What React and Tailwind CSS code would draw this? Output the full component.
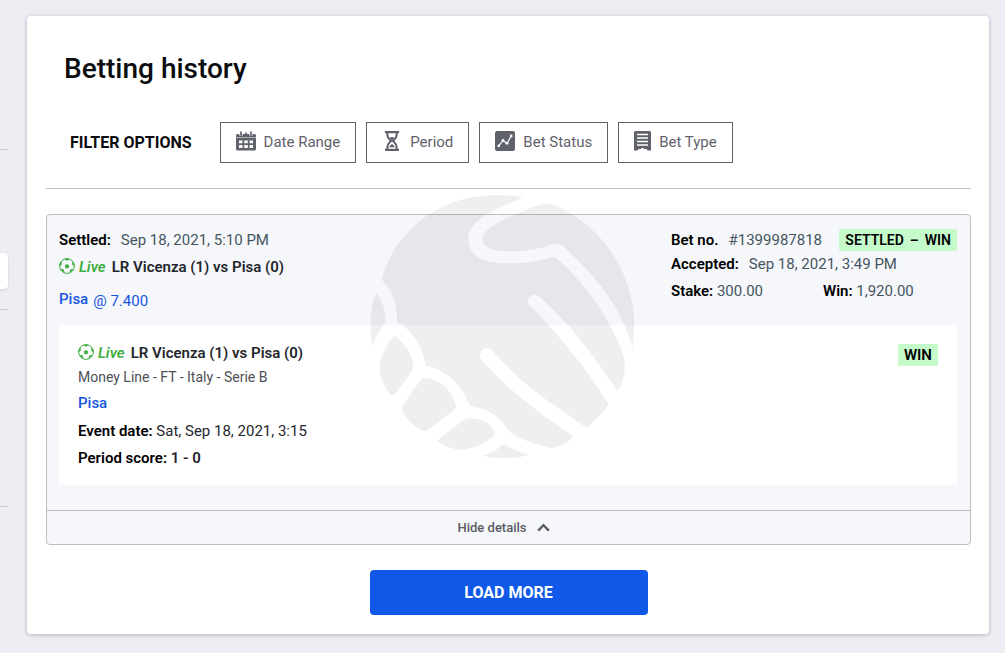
import { useState } from 'react';

const CalendarIcon = () => (
  <svg width="20" height="20" viewBox="0 0 20 20" fill="none" aria-hidden="true">
    <path d="M1.500 3h17A1.500 1.500 0 0 1 20 4.500V6H0V4.500A1.500 1.500 0 0 1 1.500 3zM0 6.600h20v11.400a1.500 1.500 0 0 1-1.500 1.500h-17A1.500 1.500 0 0 1 0 18z" fill="#5f626b" />
    <path d="M5 0v4.500M15 0v4.500" stroke="#fff" strokeWidth="3.400" />
    <path d="M5 .500v4M15 .500v4M10 1.500v3" stroke="#5f626b" strokeWidth="1.700" />
    <path
      fill="#fff"
      d="M3 9.500h3.500v2.800H3zM8.200 9.500h3.600v2.800H8.200zM13.500 9.500H17v2.800h-3.500zM3 14.100h3.500v2.800H3zM8.200 14.100h3.600v2.800H8.200zM13.500 14.100H17v2.800h-3.500z"
    />
  </svg>
);

const HourglassIcon = () => (
  <svg width="20" height="20" viewBox="-3 0 20 20" fill="none" stroke="#5f626b" aria-hidden="true">
    <path d="M0 1.200h14M0 18.800h14" strokeWidth="2.200" />
    <path d="M2.200 1.500c0 4.800 1.200 6 3.800 8.500-2.600 2.500-3.800 3.700-3.800 8.500M11.800 1.500c0 4.800-1.200 6-3.800 8.500 2.600 2.500 3.800 3.700 3.800 8.500" strokeWidth="2" />
    <path d="M4 6.200h6L7 9.500zM3.800 16.200 7 12.800l3.200 3.400z" fill="#5f626b" stroke="none" />
  </svg>
);

const ChartIcon = () => (
  <svg width="20" height="20" viewBox="0 0 20 20" fill="none" aria-hidden="true">
    <rect width="20" height="20" rx="2" fill="#5f626b" />
    <path d="M3.800 14.800 8 9.500l4 2.800L16.200 5" stroke="#fff" strokeWidth="1.200" />
    <g fill="#fff">
      <circle cx="3.800" cy="14.800" r="1.400" />
      <circle cx="8" cy="9.500" r="1.400" />
      <circle cx="12" cy="12.300" r="1.400" />
      <circle cx="16.200" cy="5" r="1.400" />
    </g>
  </svg>
);

const ReceiptIcon = () => (
  <svg width="17" height="20" viewBox="0 0 17 20" fill="none" aria-hidden="true">
    <path
      fill="#5f626b"
      d="M1.500 0h14A1.500 1.500 0 0 1 17 1.500V19.500h-3.500l-1-1.500H10.500L8.500 16.800 6.500 18H4.500l-1 1.500H0V1.500A1.500 1.500 0 0 1 1.500 0z"
    />
    <path d="M3 3.500h11M3 7h11M3 10.500h11M3 14h11" stroke="#fff" strokeWidth="1.600" />
  </svg>
);

const BallIcon = () => (
  <svg width="16" height="16" viewBox="0 0 16 16" fill="none" aria-hidden="true">
    <circle cx="8" cy="8" r="7.400" stroke="#3fae3f" strokeWidth="1" />
    <path
      fill="#3fae3f"
      d="M8 6l2.200 1.600-.800 2.600H6.600l-.800-2.600zM5.200 1.200 8 2.800l2.800-1.600L8 .500zM.600 8.300 2.900 6.500 2.600 3.200.600 6zM15.400 8.300l-2.300-1.800.300-3.300 2 2.800zM2.500 12.500l3.300 2.200-1.300-3.400-2.800-.300zM13.500 12.500l-3.300 2.200 1.300-3.400 2.800-.300z"
    />
  </svg>
);

const Watermark = () => (
  <div className="pointer-events-none absolute inset-0 flex items-center justify-center">
    <svg width="295" height="285" viewBox="1 -4 885 855" fill="#0c0400" fillOpacity="0.063" aria-hidden="true">
      <path d="M503 37C400 80 341 110 341 162C341 200 370 228 430 233C480 236 540 233 592 215Q600 213 606 219C710 310 780 430 806 510Q811 530 810 555Q808 585 794 610Q789 617 783 610C710 500 640 410 552 332A20 20 0 0 0 522 357C600 435 690 540 760 653Q762 656 760 660Q735 695 703 722Q696 728 688 722C600 660 500 600 415 498A21 21 0 0 0 380 522C440 595 540 675 652 750Q657 755 652 759Q630 777 603 786Q596 788 588 787Q515 775 462 738C440 700 400 667 350 663Q345 662 343 657C325 600 270 553 216 541Q212 539 211 533C205 490 175 435 131 413Q127 410 127 405C127 365 120 325 85 288Q81 282 83 273C125 140 250 30 420 30Q480 29 501 35Q505 36 503 37Z" />
      <path d="M383 165C383 130 440 105 500 80L545 61Q580 50 612 65C750 130 839 270 839 424Q838 460 833 490C810 385 730 275 624 182Q605 168 588 179C530 198 480 200 440 197C400 192 383 180 383 165Z" />
      <path d="M62 327Q65 323 69 328Q93 360 93 408Q92 414 86 422Q65 448 53 483C44 440 46 370 62 327Z" />
      <path d="M114 456Q120 449 127 455Q170 490 176 540Q176 548 170 557Q145 600 118 628Q112 632 106 628C85 600 73 570 75 540Q82 495 114 456Z" />
      <path d="M199 583Q207 576 220 579C260 585 295 620 304 662Q304 670 298 675L222 733Q213 739 204 736Q165 718 143 680Q140 672 146 661Q170 618 199 583Z" />
      <path d="M331 702Q339 697 350 699C390 702 413 718 420 743Q420 749 414 755Q370 790 320 793Q280 791 247 766Q290 730 331 702Z" />
      <path d="M444 779Q449 776 454 779Q485 797 521 808Q500 818 445 819Q405 818 384 811Q420 800 444 779Z" />
    </svg>
  </div>
);

const filters = [
  { label: 'Date Range', Icon: CalendarIcon },
  { label: 'Period', Icon: HourglassIcon },
  { label: 'Bet Status', Icon: ChartIcon },
  { label: 'Bet Type', Icon: ReceiptIcon },
];

const bet = {
  id: '#1399987818',
  settled: 'Sep 18, 2021, 5:10 PM',
  accepted: 'Sep 18, 2021, 3:49 PM',
  match: 'LR Vicenza (1) vs Pisa (0)',
  pick: 'Pisa',
  odds: '7.400',
  stake: '300.00',
  win: '1,920.00',
  market: 'Money Line - FT - Italy - Serie B',
  eventDate: 'Sat, Sep 18, 2021, 3:15',
  score: '1 - 0',
};

const MatchTitle = ({ match }) => (
  <div className="flex items-center leading-6 font-semibold">
    <span className="pb-0.5">
      <BallIcon />
    </span>
    <span className="ml-1 text-[#3fae3f] italic">Live</span>
    <span className="ml-1.5 text-[#24262d]">{match}</span>
  </div>
);

const BetCard = ({ bet }) => {
  const [open, setOpen] = useState(true);

  return (
    <article className="rounded border border-[#bbbdc3] bg-[#f5f7fb] text-[15px] text-[#455560]">
      <div className="pt-3 pr-[13px] pl-3">
        {/* Summary */}
        <div className="flex justify-between pt-px">
          <div>
            <p className="leading-6">
              <b className="mr-2.5 font-semibold text-black">Settled:</b>
              {bet.settled}
            </p>
            <div className="mt-[3px]">
              <MatchTitle match={bet.match} />
            </div>
            <p className="mt-2 flex gap-[5px] leading-6 text-[#1757e0]">
              <span className="font-medium">{bet.pick}</span>
              <span className="pt-0.5">@ {bet.odds}</span>
            </p>
          </div>

          <div className="w-[286px]">
            <div className="flex items-center justify-between leading-6">
              <p>
                <b className="mr-2.5 font-semibold text-black">Bet no.</b>
                {bet.id}
              </p>
              <span className="flex gap-1.5 rounded-xs bg-[#c5fbca] px-1.5 text-sm leading-[22px] font-semibold text-black">
                <span>SETTLED</span>
                <span>–</span>
                <span>WIN</span>
              </span>
            </div>
            <p className="leading-6">
              <b className="mr-2.5 font-semibold text-black">Accepted:</b>
              {bet.accepted}
            </p>
            <div className="mt-[3px] flex leading-6">
              <p className="w-[152px]">
                <b className="font-semibold text-black">Stake:</b> {bet.stake}
              </p>
              <p>
                <b className="font-semibold text-black">Win:</b> {bet.win}
              </p>
            </div>
          </div>
        </div>

        {/* Selection details */}
        {open && (
          <div className="mt-3 mb-[25px] flex items-start justify-between bg-white px-[19px] pt-4 pb-[15px]">
            <div>
              <MatchTitle match={bet.match} />
              <p className="text-sm leading-6 text-[#4d4f57]">{bet.market}</p>
              <p className="mt-0.5 leading-6 font-medium text-[#1757e0]">{bet.pick}</p>
              <p className="mt-1 leading-6 text-[#24262d]">
                <b className="font-semibold text-black">Event date:</b> {bet.eventDate}
              </p>
              <p className="mt-[3px] leading-6 font-semibold text-[#24262d]">
                <b className="font-semibold text-black">Period score:</b> {bet.score}
              </p>
            </div>
            <span className="mt-[3px] bg-[#c5fbca] px-1.5 leading-[22px] font-semibold text-black">WIN</span>
          </div>
        )}
      </div>

      <button
        onClick={() => setOpen(!open)}
        className="flex w-full items-center justify-center gap-2.5 border-t border-[#bbbdc3] py-[7px] pr-2.5 text-[13px] leading-[19px] font-medium text-[#5a5c63]"
      >
        {open ? 'Hide details' : 'Show details'}
        <svg width="13" height="9" viewBox="0 0 14 9" fill="none" className={open ? '' : 'rotate-180'} aria-hidden="true">
          <path d="M1.200 7.800 7 2l5.800 5.800" stroke="#5a5c63" strokeWidth="2.600" />
        </svg>
      </button>
    </article>
  );
};

const App = () => {
  return (
    <div className="relative flex min-h-screen items-start bg-[#edeef4] pr-4 font-[Roboto,sans-serif]">
      {/* Edge of the side menu */}
      <div className="w-2 shrink-0 pt-[149px]">
        <div className="border-t border-[#cfd0d6]" />
        <div className="mt-[103px] h-9 rounded-r bg-white shadow" />
        <div className="mt-5 border-t border-[#cfd0d6]" />
        <div className="mt-[196px] border-t border-[#cfd0d6]" />
      </div>

      <main className="mt-4 mb-4 ml-[19px] flex-1 rounded bg-white pt-[33px] pr-[18px] pb-[19px] pl-[19px] shadow-[0_1px_4px_rgba(0,0,0,0.25)]">
        <h1 className="ml-[18px] text-[28px] leading-10 font-medium text-[#0b0c10]">Betting history</h1>

        {/* Filters */}
        <div className="mt-[33px] flex flex-wrap items-center gap-2.5 border-b border-[#bbbdc3] pb-[25px] pl-6">
          <h2 className="mr-[18px] text-base font-bold text-[#0b0c10]">FILTER OPTIONS</h2>
          {filters.map(({ label, Icon }) => (
            <button
              key={label}
              className="flex h-[41px] items-center gap-2 border border-[#5f626b] px-[15px] text-[15px] text-[#5f626b]"
            >
              <span className="pb-1">
                <Icon />
              </span>
              {label}
            </button>
          ))}
        </div>

        <div className="mt-[25px]">
          <BetCard bet={bet} />
        </div>

        <button className="mx-auto mt-[25px] block h-[45px] w-[278px] rounded bg-[#1059e8] text-base font-bold text-white">
          LOAD MORE
        </button>
      </main>

      <Watermark />
    </div>
  );
};

export default App;
